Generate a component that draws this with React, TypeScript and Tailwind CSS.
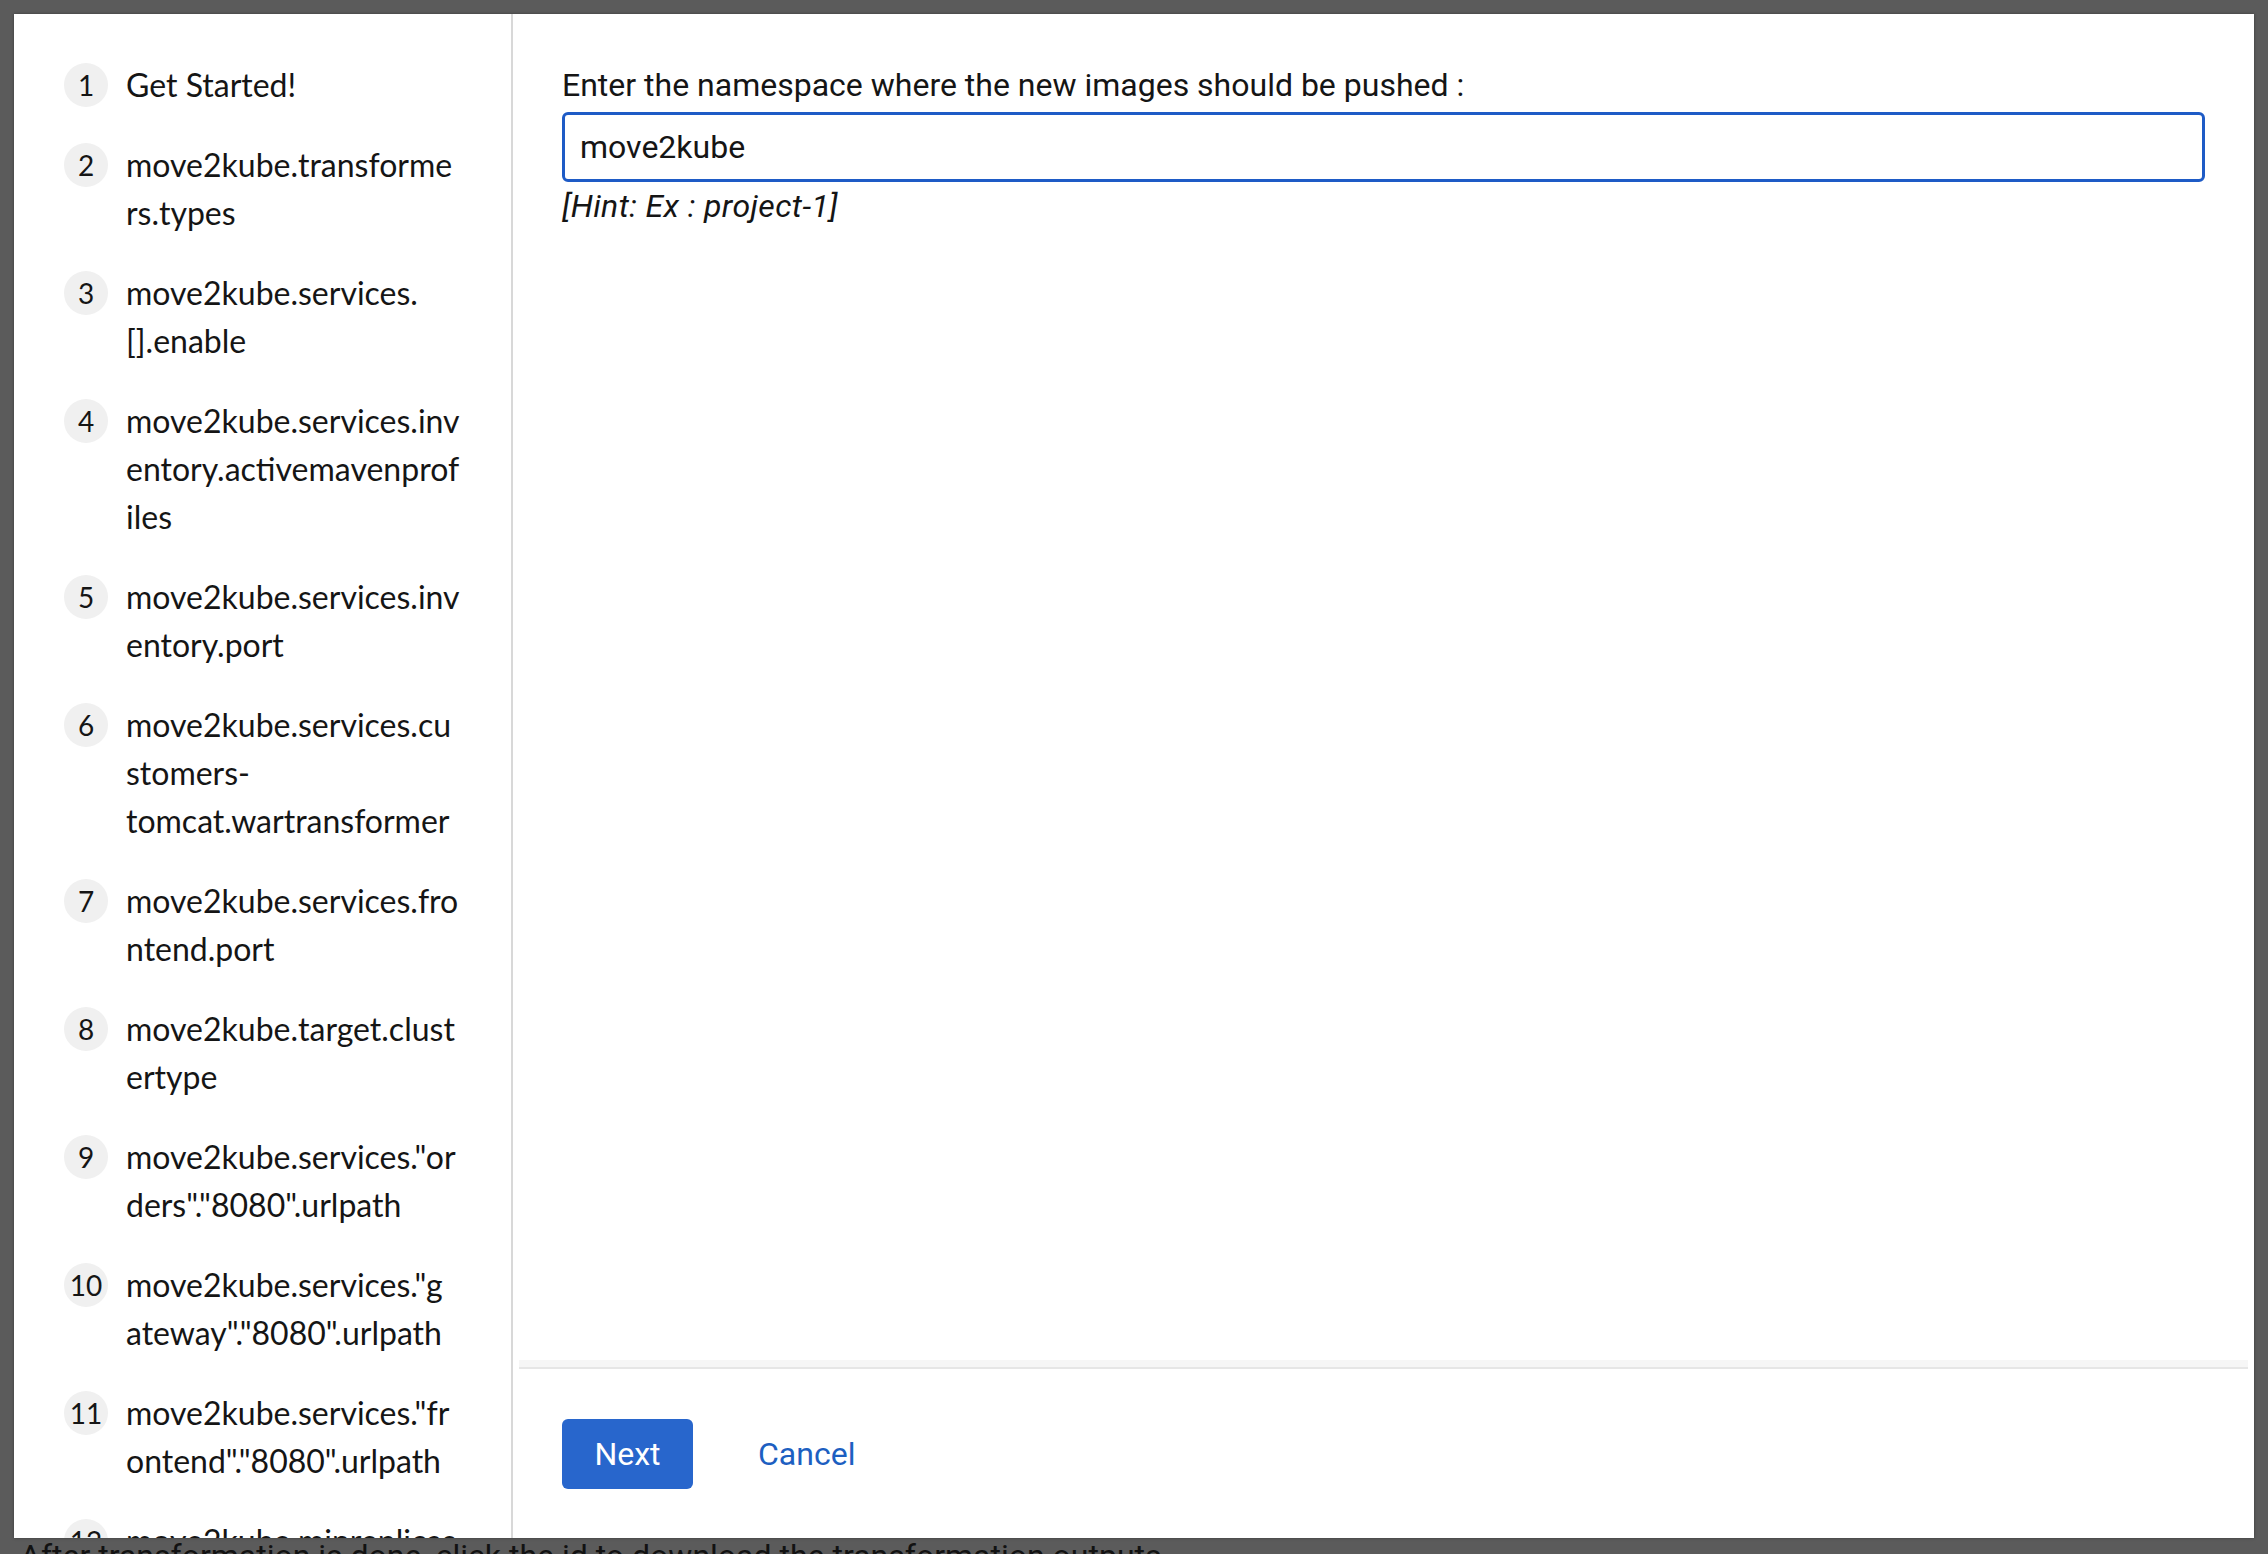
const steps: string[][] = [
  ["Get Started!"],
  ["move2kube.transforme", "rs.types"],
  ["move2kube.services.", "[].enable"],
  ["move2kube.services.inv", "entory.activemavenprof", "iles"],
  ["move2kube.services.inv", "entory.port"],
  ["move2kube.services.cu", "stomers-", "tomcat.wartransformer"],
  ["move2kube.services.fro", "ntend.port"],
  ["move2kube.target.clust", "ertype"],
  ["move2kube.services.\"or", "ders\".\"8080\".urlpath"],
  ["move2kube.services.\"g", "ateway\".\"8080\".urlpath"],
  ["move2kube.services.\"fr", "ontend\".\"8080\".urlpath"],
  ["move2kube.minreplicas"],
];

export default function App() {
  return (
    <div className="h-[1554px] w-full overflow-hidden bg-[#5b5b5b] pt-[14px] pl-[14px] text-[#151515]">
      {/* modal */}
      <div className="relative z-10 flex h-[1524px] w-[2240px] bg-white shadow-[0_0_3px_rgba(0,0,0,0.35)]">
        {/* wizard nav */}
        <nav className="w-[499px] shrink-0 overflow-hidden border-r-2 border-[#d8d8d8] pt-[31px] font-['Lato',sans-serif]">
          {steps.map((lines, i) => (
            <div key={i} className="flex gap-[18px] py-4 pl-[50px]">
              <span className="mt-[2px] flex h-[44px] w-[44px] shrink-0 items-center justify-center rounded-full bg-[#f0f0f0] text-[28px] leading-none">
                {i + 1}
              </span>
              <div className="text-[32px] leading-[48px]">
                {lines.map((l) => (
                  <div key={l} className="whitespace-nowrap">{l}</div>
                ))}
              </div>
            </div>
          ))}
        </nav>

        {/* wizard main + footer */}
        <div className="flex min-w-0 flex-1 flex-col font-['Roboto',sans-serif]">
          <div className="flex-1 px-[49px] pt-[47px]">
            <label className="block text-[32px] leading-[48px]">
              Enter the namespace where the new images should be pushed :
            </label>
            <div className="mt-[3px] flex h-[70px] items-center rounded-[6px] border-[3px] border-[#1e5bc6] px-[15px] text-[32px]">
              move2kube
            </div>
            <div className="text-[32px] italic leading-[48px] tracking-[0.4px]">[Hint: Ex : project-1]</div>
          </div>
          <div className="mx-[6px] h-[9px] border-b-2 border-[#e6e6e6] bg-[#f6f6f6]" />
          <div className="flex h-[169px] items-center gap-[65px] px-[49px]">
            <button className="h-[70px] w-[131px] rounded-[6px] bg-[#2866cc] text-[32px] text-white">Next</button>
            <button className="text-[32px] text-[#1d5fc1]">Cancel</button>
          </div>
        </div>
      </div>
      <p className="mt-[2px] ml-[6px] whitespace-nowrap font-['Roboto',sans-serif] text-[32px] leading-none text-[#121212]">
        After transformation is done, click the id to download the transformation outputs.
      </p>
    </div>
  );
}
